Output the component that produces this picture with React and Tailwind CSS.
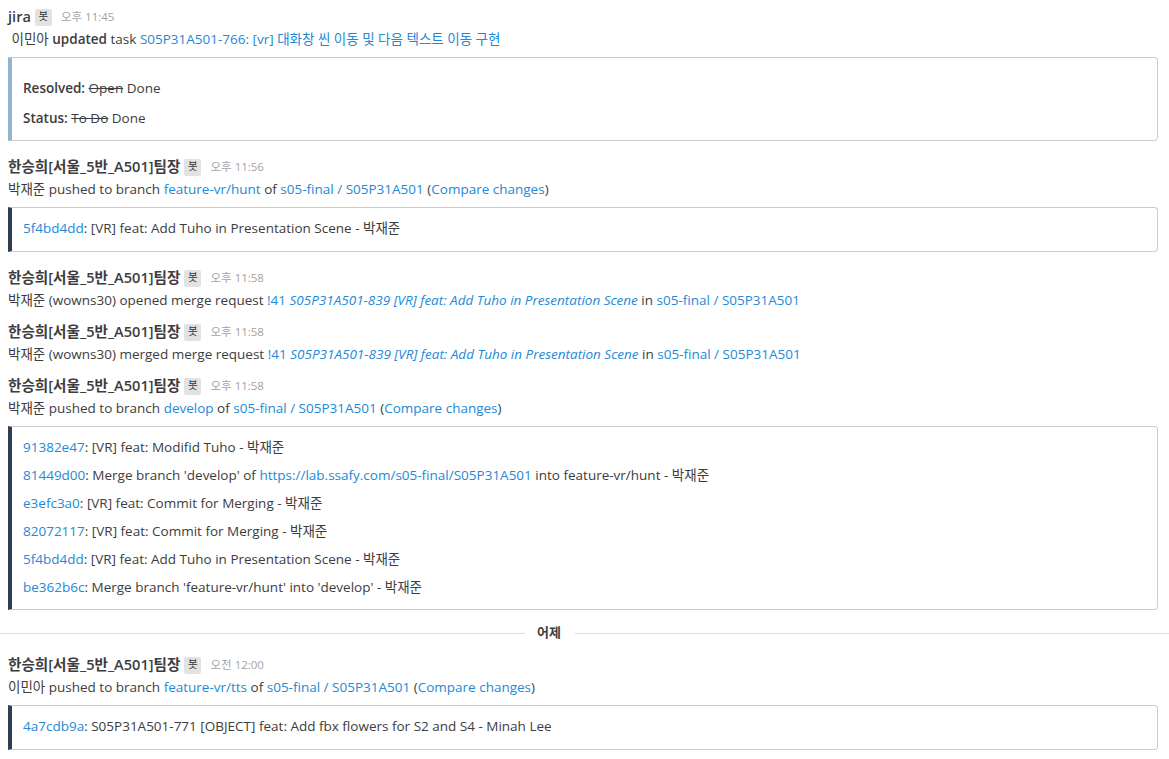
import React from "react";

const L = ({ children, i }) => (
  <span className={"text-[#2389d7]" + (i ? " italic" : "")}>{children}</span>
);

const Header = ({ name, time, ampm }) => (
  <div className="flex items-center h-[22px]">
    <span className="font-semibold text-[#3d3c40] text-[14.6px]">{name}</span>
    <span className="ml-[4px] w-[17px] h-[17px] flex items-center justify-center bg-[#e2e2e2] text-[10.5px] text-[#333] rounded-[2px]">봇</span>
    <span className="ml-[9px] text-[11.5px] text-[#a3a3a3]">
      {ampm} {time}
    </span>
  </div>
);

const Msg = ({ children }) => (
  <div className="leading-[22px] h-[22px] text-[13.5px] text-[#3d3c40] whitespace-nowrap">{children}</div>
);

const Box = ({ children, dark, className = "" }) => (
  <div
    className={
      "mt-[7px] border border-[#cccccc] border-l-4 rounded-r-[4px] pl-[11px] text-[13.5px] " +
      (dark ? "border-l-[#2f3e4e] " : "border-l-[#91b4cf] ") +
      className
    }
  >
    {children}
  </div>
);

const Commit = ({ hash, children }) => (
  <div className="leading-[20px] h-[20px] whitespace-nowrap">
    <L>{hash}</L>: {children}
  </div>
);

export default function App() {
  const gl = "한승희[서울_5반_A501]팀장";
  return (
    <div
      className="w-[1169px] h-[759px] bg-white overflow-hidden text-[13.5px] text-[#3d3c40]"
      style={{ fontFamily: "'Open Sans', 'Noto Sans CJK KR', sans-serif" }}
    >
      <div className="pl-2 pr-[11px] pt-[6px]">
        {/* Post 1 */}
        <Header name="jira" ampm="오후" time="11:45" />
        <Msg>
          &nbsp;이민아 <span className="font-semibold">updated</span> task{" "}
          <L>S05P31A501-766: [vr] 대화창 씬 이동 및 다음 텍스트 이동 구현</L>
        </Msg>
        <Box className="pt-[20px] pb-[12px]">
          <div className="leading-[20px]">
            <span className="font-semibold">Resolved:</span>{" "}
            <span className="line-through">Open</span> Done
          </div>
          <div className="leading-[20px] mt-[10px]">
            <span className="font-semibold">Status:</span>{" "}
            <span className="line-through">To Do</span> Done
          </div>
        </Box>

        {/* Post 2 */}
        <div className="mt-[15px]">
          <Header name={gl} ampm="오후" time="11:56" />
          <Msg>
            박재준 pushed to branch <L>feature-vr/hunt</L> of{" "}
            <L>s05-final / S05P31A501</L> (<L>Compare changes</L>)
          </Msg>
          <Box dark className="pt-[10px] pb-[13px]">
            <Commit hash="5f4bd4dd">[VR] feat: Add Tuho in Presentation Scene - 박재준</Commit>
          </Box>
        </div>

        {/* Post 3 */}
        <div className="mt-[15px]">
          <Header name={gl} ampm="오후" time="11:58" />
          <Msg>
            박재준 (wowns30) opened merge request{" "}
            <L>!41</L>{" "}
            <L i>S05P31A501-839 [VR] feat: Add Tuho in Presentation Scene</L> in{" "}
            <L>s05-final / S05P31A501</L>
          </Msg>
        </div>

        {/* Post 4 */}
        <div className="mt-[10px]">
          <Header name={gl} ampm="오후" time="11:58" />
          <Msg>
            박재준 (wowns30) merged merge request{" "}
            <L>!41</L>{" "}
            <L i>S05P31A501-839 [VR] feat: Add Tuho in Presentation Scene</L> in{" "}
            <L>s05-final / S05P31A501</L>
          </Msg>
        </div>

        {/* Post 5 */}
        <div className="mt-[10px]">
          <Header name={gl} ampm="오후" time="11:58" />
          <Msg>
            박재준 pushed to branch <L>develop</L> of{" "}
            <L>s05-final / S05P31A501</L> (<L>Compare changes</L>)
          </Msg>
          <Box dark className="pt-[10px] pb-[12px] flex flex-col gap-[8px]">
            <Commit hash="91382e47">[VR] feat: Modifid Tuho - 박재준</Commit>
            <Commit hash="81449d00">
              Merge branch 'develop' of{" "}
              <L>https://lab.ssafy.com/s05-final/S05P31A501</L> into feature-vr/hunt - 박재준
            </Commit>
            <Commit hash="e3efc3a0">[VR] feat: Commit for Merging - 박재준</Commit>
            <Commit hash="82072117">[VR] feat: Commit for Merging - 박재준</Commit>
            <Commit hash="5f4bd4dd">[VR] feat: Add Tuho in Presentation Scene - 박재준</Commit>
            <Commit hash="be362b6c">Merge branch 'feature-vr/hunt' into 'develop' - 박재준</Commit>
          </Box>
        </div>
      </div>

      {/* Date separator */}
      <div className="mt-[13px] h-[20px] flex items-center">
        <div className="w-[525px] h-px bg-[#dddddd]" />
        <span className="ml-[12px] mr-[14px] text-[13px] font-semibold text-[#3d3c40]">어제</span>
        <div className="flex-1 h-px bg-[#dddddd]" />
      </div>

      <div className="pl-2 pr-[11px] mt-[11px]">
        <Header name={gl} ampm="오전" time="12:00" />
        <Msg>
          이민아 pushed to branch <L>feature-vr/tts</L> of{" "}
          <L>s05-final / S05P31A501</L> (<L>Compare changes</L>)
        </Msg>
        <Box dark className="pt-[10px] pb-[13px]">
          <Commit hash="4a7cdb9a">
            S05P31A501-771 [OBJECT] feat: Add fbx flowers for S2 and S4 - Minah Lee
          </Commit>
        </Box>
      </div>
    </div>
  );
}
